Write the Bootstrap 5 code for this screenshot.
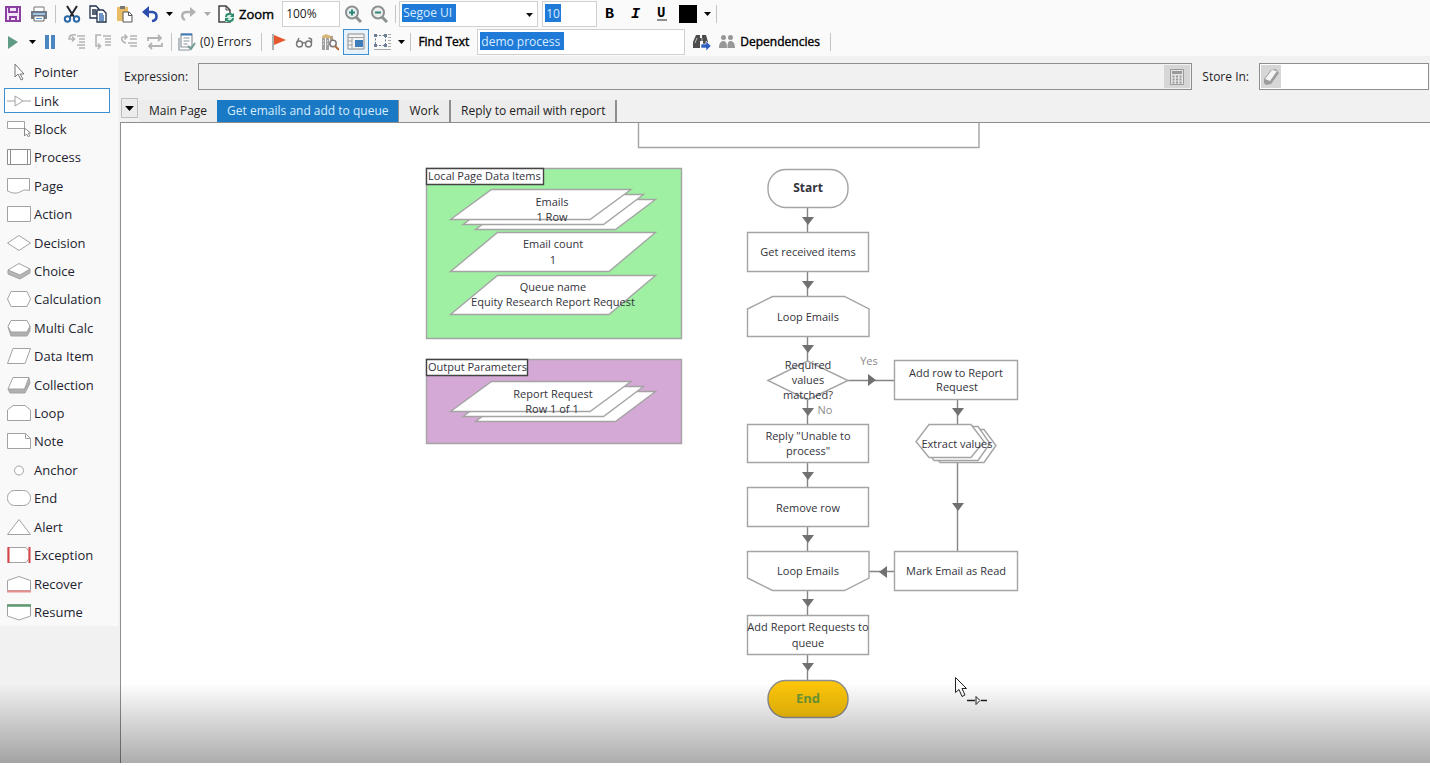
<!DOCTYPE html>
<html lang="en">
<head>
<meta charset="utf-8">
<meta name="viewport" content="width=device-width, initial-scale=1">
<title>Process Studio</title>
<link href="https://cdn.jsdelivr.net/npm/bootstrap@5.3.0/dist/css/bootstrap.min.css" rel="stylesheet">
<style>
  body { font-family: "Open Sans", "Noto Sans", sans-serif; font-size: 12px; line-height: 16px; color: #1e1e28; background: #fff; padding-bottom: 3px; }
  svg { display: block; flex: none; }
  .studio { background: #f1f1f1; }
  .toolbar { height: 28px; background: #fafafa; }
  .tool { width: 26px; height: 26px; padding: 0; border: 1px solid transparent; background: none; display: flex; align-items: center; justify-content: center; flex: none; color: #222; }
  .tool.wide { width: auto; gap: 4px; padding: 0 2px; }
  .tool.drop { width: 12px; }
  .tool.pressed { border: 1px solid #3c8fd0; background: #e6f1fa; }
  .tool svg { width: 18px; height: 18px; }
  .tool.drop svg { width: 7px; height: 4px; }
  .split { width: 7px; height: 18px; flex: none; background: linear-gradient(#c4c4c4, #c4c4c4) center / 1px 100% no-repeat; }
  .strong-label { font-size: 12px; color: #000; -webkit-text-stroke: 0.4px #000; }
  .strong-label.large { font-size: 13px; }
  .field { height: 26px; border: 1px solid #d0d0d0; background-color: #fff; border-radius: 0; padding: 0 0 2px 3px; font-size: 12px; color: #222; flex: none; appearance: none; outline: 0; }
  .w-zoom { width: 58px; } .w-font { width: 139px; } .w-size { width: 55px; } .w-find { width: 208px; }
  .picked { color: #d8ecff; background-image: linear-gradient(#1f7ad8, #1f7ad8); background-repeat: no-repeat; background-position: 2px 2px; }
  .picked.w-font { background-image: url("data:image/svg+xml,%3Csvg xmlns='http://www.w3.org/2000/svg' viewBox='0 0 7 4'%3E%3Cpath d='M0 0h7L3.500 4z' fill='%23111'/%3E%3C/svg%3E"), linear-gradient(#1f7ad8, #1f7ad8); background-size: 7px 4px, 54px 18px; background-position: 126px 11px, 2px 2px; }
  .picked.w-size { background-size: 16px 18px; }
  .picked.w-find { background-size: 84px 18px; }

  .palette-col { width: 120px; flex: none; }
  .palette { height: 570px; padding-top: 2px; width: 118px; background: #f9f9f9; }
  .stage { flex: 1 1 0; min-height: 0; margin: 2px 8px 2px 4px; padding: 0 0 0 2px; border: 1px solid transparent; background: none; display: flex; align-items: center; gap: 3px; font-size: 13px; color: #23232f; text-align: left; }
  .stage.chosen { border-color: #3c8fd0; background: #fff; }
  .stage svg { width: 24px; height: 18px; fill: #fff; stroke: #a2a2a2; stroke-width: 1; }

  .expr-row { height: 27px; margin: 7px 1px 7px 4px; }
  .box { border: 1px solid #8e8e8e; height: 27px; background: #f1f1f1; padding: 1px; }
  .box input { border: 0; background: transparent; min-width: 0; outline: 0; }
  .box button { border: 0; background: #d6d6d6; padding: 0; display: flex; align-items: center; justify-content: center; }
  .box .calc { width: 26px; }
  .box .rubber { width: 22px; }
  .expr-label { margin-right: 10px; }
  .store-label { margin: 0 10px; }
  .store-box { width: 170px; background: #fff; }
  .tabs { height: 26px; border-bottom: 1px solid #8e8e8e; padding-left: 1px; }
  .tabs button { border: 0; background: #ececec; color: #222; height: 22px; padding: 0 10px; white-space: nowrap; }
  .tabs .pages { width: 17px; height: 20px; padding: 0; border: 1px solid #bdbdbd; margin: 0 1px 4px 0; }
  .tabs .now { background: #1a79c4; color: #d4ecff; border-right: 1px solid #8e8e8e; }
  .tabs .ruled { border-right: 2px solid #8e8e8e; }
  .canvas { border-left: 1px solid #8e8e8e; background: #fff; overflow: hidden; min-height: 0; }
  .flow { width: 100%; height: 639px; font-size: 11px; fill: #fff; stroke: #a4a4a4; stroke-width: 1.400; }
  .flow text { fill: #33333b; stroke: none; text-anchor: middle; }
  .flow .lead-in { text-anchor: start; }
  .flow .faint { fill: #8c8c8c; }
  .flow .wire { fill: none; stroke: #858585; }
  .flow .tip { fill: #707070; stroke: none; }
  .shade { height: 80px; left: 0; right: 0; bottom: 0; background: linear-gradient(rgba(0,0,0,0), rgba(0,0,0,.15) 45%, rgba(0,0,0,.32)); pointer-events: none; }
</style>
</head>
<body class="d-flex flex-column min-vh-100">
<svg width="0" height="0" class="position-absolute" aria-hidden="true">
  <symbol id="caret" viewBox="0 0 7 4"><path d="M0 0h7L3.500 4z"/></symbol>
  <symbol id="down" viewBox="0 0 12 8"><path d="M0 0h12L6 8z"/></symbol>
</svg>
<div class="studio position-relative flex-fill d-flex flex-column">
  <header>
    <div class="toolbar d-flex align-items-center" role="toolbar" aria-label="Edit">
      <button class="tool" aria-label="Save"><svg viewBox="0 0 18 18" fill="none" stroke="#8b3fa0" stroke-width="2"><path d="M2 2h14v14H2z" fill="#f3e6f6"/><path d="M5 2v5h8V2M6 16v-4h6v4"/></svg></button>
      <button class="tool" aria-label="Print"><svg viewBox="0 0 18 18"><path d="M4 2h10v5H4z" fill="#fff" stroke="#777"/><path d="M1 6h16v8H1z" fill="#707a86"/><path d="M3 8h12v2H3z" fill="#9cc4e8"/><path d="M4 11h10v5H4z" fill="#fff" stroke="#666"/><path d="M6 13.500h6" stroke="#4a8fd0"/></svg></button>
      <span class="split"></span>
      <button class="tool" aria-label="Cut"><svg viewBox="0 0 18 18" fill="none"><path d="M4 1l7 11M14 1L7 12" stroke="#20242c" stroke-width="2"/><circle cx="4.500" cy="14" r="2.700" stroke="#2968a8" stroke-width="2"/><circle cx="13.500" cy="14" r="2.700" stroke="#2968a8" stroke-width="2"/></svg></button>
      <button class="tool" aria-label="Copy"><svg viewBox="0 0 18 18" fill="#fff" stroke="#20304a" stroke-width="1.300"><path d="M1 1h6l3 3v9H1z"/><path d="M3 5h4M3 7h5M3 9h5"/><path d="M8 5h6l3 3v9H8z"/><path d="M10 9h4M10 11h5M10 13h5M10 15h5" stroke="#3b6fb0"/></svg></button>
      <button class="tool" aria-label="Paste"><svg viewBox="0 0 18 18"><path d="M2 2h11v14H2z" fill="#e9bd66"/><path d="M5 1h5v3H5z" fill="#777"/><path d="M8 7h6l3 3v7H8z" fill="#fff" stroke="#555"/><path d="M13.500 7v3.500H17" fill="none" stroke="#555"/></svg></button>
      <button class="tool" aria-label="Undo"><svg viewBox="0 0 18 18"><path d="M4 7h7c6 0 6 8 0 9" fill="none" stroke="#2c4fae" stroke-width="2.600"/><path d="M1 7l7-6v12z" fill="#2c4fae"/></svg></button>
      <button class="tool drop" aria-label="Undo list"><svg><use href="#caret"/></svg></button>
      <button class="tool" aria-label="Redo"><svg viewBox="0 0 18 18"><path d="M13 7H8c-6 0-6 6-2 8" fill="none" stroke="#b2b2b2" stroke-width="2.500"/><path d="M17 7l-6-5v10z" fill="#b2b2b2"/></svg></button>
      <button class="tool drop" aria-label="Redo list"><svg fill="#aaa"><use href="#caret"/></svg></button>
      <button class="tool" aria-label="Refresh"><svg viewBox="0 0 18 18"><path d="M2 1h7l4 4v12H2z" fill="#fff" stroke="#444" stroke-width="1.500"/><path d="M9 1v4h4" fill="none" stroke="#444"/><path d="M8 8h9v9H8z" fill="#d7efe6"/><path d="M9 12c0-4 6-4 7-1M16 13c0 4-6 4-7 1" fill="none" stroke="#2b8a6a" stroke-width="1.800"/><path d="M17 8v4h-4zM8 17v-4h4z" fill="#2b8a6a"/></svg></button>
      <label class="strong-label large ps-0 pe-2" for="zoom">Zoom</label>
      <input class="field w-zoom" id="zoom" value="100%">
      <button class="tool" aria-label="Zoom in"><svg viewBox="0 0 18 18" fill="none"><circle cx="8" cy="7.500" r="6" stroke="#8a8f90" stroke-width="2" fill="#e8f2f0"/><path d="M12 12l5 5" stroke="#8a8f90" stroke-width="3"/><path d="M5 7.500h6M8 4.500v6" stroke="#2d8577" stroke-width="2"/></svg></button>
      <button class="tool" aria-label="Zoom out"><svg viewBox="0 0 18 18" fill="none"><circle cx="8" cy="7.500" r="6" stroke="#8a8f90" stroke-width="2" fill="#eee"/><path d="M12 12l5 5" stroke="#8a8f90" stroke-width="3"/><path d="M5 7.500h6" stroke="#2d8577" stroke-width="2"/></svg></button>
      <span class="split"></span>
      <select class="field picked w-font me-1" aria-label="Font"><option>Segoe UI</option></select>
      <input class="field picked w-size" aria-label="Font size" value="10">
      <button class="tool" aria-label="Bold"><svg viewBox="0 0 18 18"><text x="4" y="13" font-family="Liberation Mono" font-size="15" font-weight="bold">B</text></svg></button>
      <button class="tool" aria-label="Italic"><svg viewBox="0 0 18 18"><text x="4" y="13" font-family="Liberation Mono" font-size="15" font-weight="bold" font-style="italic">I</text></svg></button>
      <button class="tool" aria-label="Underline"><svg viewBox="0 0 18 18"><text x="4" y="12" font-family="Liberation Mono" font-size="14" font-weight="bold">U</text><path d="M4 15h10" stroke="#222"/></svg></button>
      <button class="tool" aria-label="Colour"><svg viewBox="0 0 18 18"><path d="M0 0h18v18H0z"/></svg></button>
      <button class="tool drop" aria-label="More colours"><svg><use href="#caret"/></svg></button>
      <span class="split"></span>
    </div>
    <div class="toolbar d-flex align-items-center" role="toolbar" aria-label="Run">
      <button class="tool" aria-label="Go"><svg viewBox="0 0 18 18"><path d="M4 3l10 6-10 7z" fill="#5f9c86"/></svg></button>
      <button class="tool drop" aria-label="Run speed"><svg><use href="#caret"/></svg></button>
      <button class="tool" aria-label="Pause"><svg viewBox="0 0 18 18" fill="#4a86c0"><path d="M3 2h4v14H3zM9 2h4v14H9z"/></svg></button>
      <button class="tool" aria-label="Step"><svg viewBox="0 0 18 18" fill="none" stroke="#b4b4b4" stroke-width="1.600"><path d="M8 2C3 1 1 3 1 6h5M4 3.500L6.500 6 4 8.500M9 3h8M11 6h6M11 9h6M9 12h8M11 15h6"/></svg></button>
      <button class="tool" aria-label="Step over"><svg viewBox="0 0 18 18" fill="none" stroke="#b4b4b4" stroke-width="1.600"><path d="M7 2H2v11h4M4 10.500L6.500 13 4 16M9 3h8M11 6h6M11 9h6M11 12h6"/></svg></button>
      <button class="tool" aria-label="Step out"><svg viewBox="0 0 18 18" fill="none" stroke="#b4b4b4" stroke-width="1.600"><path d="M6 10C1 9 1 4 3 4h4M4.500 1.500L7 4 4.500 6.500M10 3h7M10 6h7M8 10h9M10 13h7"/></svg></button>
      <button class="tool" aria-label="Reset"><svg viewBox="0 0 18 18" fill="none" stroke="#b4b4b4" stroke-width="1.800"><path d="M2 8V5h13M12 2l3 3-3 3M16 10v3H3M6 10l-3 3 3 3"/></svg></button>
      <span class="split"></span>
      <button class="tool wide"><svg viewBox="0 0 18 18" fill="#fff" stroke="#8a949c" stroke-width="1.200"><path d="M1 5v12h11"/><path d="M3 1h11v13H3z"/><path d="M3 1.500h11" stroke="#3f78b8" stroke-width="2"/><path d="M5.500 5h6M5.500 8h6M5.500 11h4"/><path d="M10 13l3 3 4-6" fill="none" stroke="#6f9c90" stroke-width="1.800"/></svg>(0) Errors</button>
      <span class="split ms-1"></span>
      <button class="tool" aria-label="Breakpoint"><svg viewBox="0 0 18 18"><path d="M4 1v16" stroke="#999" stroke-width="1.500"/><path d="M5 2l12 5-12 5z" fill="#e4582c"/></svg></button>
      <button class="tool" aria-label="Watch"><svg viewBox="0 0 18 18" fill="none" stroke="#777" stroke-width="1.400"><circle cx="4.500" cy="11" r="3"/><circle cx="13.500" cy="11" r="3"/><path d="M7 10.500c1-1 3-1 4 0M1.500 10L4 5M16.500 10V6l-3-1"/></svg></button>
      <button class="tool" aria-label="Process search"><svg viewBox="0 0 18 18"><path d="M1 5h3v12H1zM5 5h3v12H5z" fill="#a0a0a0"/><path d="M1 3l4-2 5 2v2H1z" fill="#d8b878"/><path d="M2 8h1M2 11h1M6 8h1M6 11h1" stroke="#fff"/><path d="M9 3h3v4H9z" fill="#b5a080"/><circle cx="12" cy="10.500" r="3.200" fill="#fff" stroke="#777" stroke-width="1.500"/><path d="M14 13l4 4" stroke="#b06a3a" stroke-width="2"/></svg></button>
      <button class="tool pressed" aria-label="Full screen"><svg viewBox="0 0 18 18"><path d="M1 1h16v15H1z" fill="#f4f4f4" stroke="#8c8c8c"/><path d="M1 4.500h16M5 4v12M1 8h4M1 12h4" stroke="#a0a0a0"/><path d="M8 7h8v7H8z" fill="#3f7cba"/></svg></button>
      <button class="tool" aria-label="Pan view"><svg viewBox="0 0 18 18" fill="none" stroke="#8a8a8a"><path d="M2.500 2.500h10v10h-10z" stroke="#6d7f95" stroke-dasharray="2 1.500"/><path d="M1 1h3v3H1zM11 1h3v3h-3zM1 11h3v3H1zM11 11h3v3h-3z" fill="#6d7f95" stroke="none"/><path d="M15 1.500h3M15 4.500h3M15 7.500h3M15 10.500h3M15 13.500h3M1 16.500h17" stroke="#aaa"/></svg></button>
      <button class="tool drop" aria-label="View options"><svg><use href="#caret"/></svg></button>
      <span class="split"></span>
      <label class="strong-label ps-1 pe-2" for="find">Find Text</label>
      <input class="field picked w-find" id="find" value="demo process">
      <button class="tool ms-1" aria-label="Find next"><svg viewBox="0 0 18 18"><path d="M3 2h4v3h2V2h4l2 7v6h-5V8H7v7H0V9z" fill="#4c4c4c"/><path d="M2 10l2-5M9 5v3" stroke="#bbb"/><path d="M8 11h5V8l5 5-5 5v-3H8z" fill="#2d5fc0" stroke="#fff" stroke-width=".6"/></svg></button>
      <button class="tool wide strong-label"><svg viewBox="0 0 18 18" fill="#989898"><circle cx="5.500" cy="4.500" r="2.500"/><circle cx="12.500" cy="4.500" r="2.500"/><path d="M1 15c0-5 2-7 4.500-7S9 10 9 15zM9.500 15c0-5 .5-7 3-7s4.500 2 4.500 7z"/></svg>Dependencies</button>
      <span class="split ms-1"></span>
    </div>
  </header>

  <div class="d-flex flex-fill">
    <aside class="palette-col">
      <div class="palette d-flex flex-column">
        <button class="stage"><svg viewBox="0 0 24 18"><path d="M8 1v13l3-3 3 6 2-1-3-5h4z" stroke="#777"/></svg>Pointer</button>
        <button class="stage chosen"><svg viewBox="0 0 24 18"><path d="M0 9h8M16 9h8M8 4v10l8-5z"/></svg>Link</button>
        <button class="stage"><svg viewBox="0 0 24 18"><path d="M.5 1.500h17v7H.5z"/><path d="M17.500 8v8l2-2 2 3 1-1-1-3h2z" stroke="#888"/></svg>Block</button>
        <button class="stage"><svg viewBox="0 0 24 18"><path d="M.5 1.500h23v15H.5zM3.500 1.500v15M20.500 1.500v15" stroke="#8c8c8c"/></svg>Process</button>
        <button class="stage"><svg viewBox="0 0 24 18"><path d="M.5 1.500h22v12c-7-2-8 2-13 2.500-4 .5-6-1-9-2z"/></svg>Page</button>
        <button class="stage"><svg viewBox="0 0 24 18"><path d="M.5 1.500h23v15H.5z"/></svg>Action</button>
        <button class="stage"><svg viewBox="0 0 24 18"><path d="M.5 9L12 1.500 23.500 9 12 16.500z"/></svg>Decision</button>
        <button class="stage"><svg viewBox="0 0 24 18"><path d="M1 8v4l12 5 10-6V7z" fill="#b5b5b5"/><path d="M1 8l11-6.500L23 7l-10 6z"/></svg>Choice</button>
        <button class="stage"><svg viewBox="0 0 24 18"><path d="M4 1.500h16l3.500 7.500-3.500 7.500H4L.5 9z"/></svg>Calculation</button>
        <button class="stage"><svg viewBox="0 0 24 18"><path d="M1 8l3 9h16l3-5V7z" fill="#b0b0b0"/><path d="M4 1.500h16L23 7l-3 6H4L1 7.500z"/></svg>Multi Calc</button>
        <button class="stage"><svg viewBox="0 0 24 18"><path d="M6 1.500h17.500L18 16.500H.5z"/></svg>Data Item</button>
        <button class="stage"><svg viewBox="0 0 24 18"><path d="M1 13l2 4h15l5-10-1-5z" fill="#b0b0b0"/><path d="M6 1.500h16L17.500 13H1z"/></svg>Collection</button>
        <button class="stage"><svg viewBox="0 0 24 18"><path d="M.5 16.500V6L6 1.500h12L23.500 6v10.500z"/></svg>Loop</button>
        <button class="stage"><svg viewBox="0 0 24 18"><path d="M.5 1.500h18l5 5v10H.5zM18.500 1.500v5h5"/></svg>Note</button>
        <button class="stage"><svg viewBox="0 0 24 18"><circle cx="12" cy="9.500" r="4.500"/></svg>Anchor</button>
        <button class="stage"><svg viewBox="0 0 24 18"><rect x=".5" y="1.500" width="23" height="15" rx="7"/></svg>End</button>
        <button class="stage"><svg viewBox="0 0 24 18"><path d="M12 1.500l11.500 15H.5z"/></svg>Alert</button>
        <button class="stage"><svg viewBox="0 0 24 18"><path d="M1 1.500h18l3 4v7l-3 4H1z"/><path d="M1.500 1v16M22.500 1v16" stroke="#d9444a" stroke-width="2"/></svg>Exception</button>
        <button class="stage"><svg viewBox="0 0 24 18"><path d="M.5 15.500V5.500l11.500-4 11.500 4v10z"/><path d="M0 16.500h24" stroke="#ee8d8d" stroke-width="2"/></svg>Recover</button>
        <button class="stage"><svg viewBox="0 0 24 18"><path d="M.5 2v11L12 17l11.500-4V2z"/><path d="M0 2.500h24" stroke="#5d9a70" stroke-width="2.500"/></svg>Resume</button>
      </div>
    </aside>

    <main class="flex-fill d-flex flex-column">
      <div class="expr-row d-flex align-items-center">
        <label for="expr" class="expr-label">Expression:</label>
        <div class="box d-flex flex-fill">
          <input id="expr" class="flex-fill">
          <button class="calc" aria-label="Expression builder"><svg width="14" height="16" viewBox="0 0 14 16" fill="none" stroke="#9a9a9a"><path d="M.5.500h13v15H.5z" fill="#e4e4e4"/><path d="M2 3.500h10" stroke-width="3"/><path d="M2.500 7.500h9M2.500 10.500h9M2.500 13.500h9" stroke-width="2" stroke-dasharray="2 1.500"/></svg></button>
        </div>
        <label for="store" class="store-label">Store In:</label>
        <div class="box store-box d-flex">
          <button class="rubber" aria-label="Clear"><svg width="16" height="16" viewBox="0 0 16 16"><path d="M1 10l7-9 5-1 3 4-8 11-5 1-2-2z" fill="#9c9c9c"/><path d="M2 10l7-9 5 1-7 10z" fill="#f4f4f4"/></svg></button>
          <input id="store" class="flex-fill">
        </div>
      </div>
      <div class="tabs d-flex align-items-end" role="tablist">
        <button class="pages" aria-label="Page list"><svg class="m-auto" width="9" height="5"><use href="#caret"/></svg></button>
        <button role="tab">Main Page</button>
        <button role="tab" class="now">Get emails and add to queue</button>
        <button role="tab" class="ruled">Work</button>
        <button role="tab" class="ruled">Reply to email with report</button>
      </div>
      <div class="canvas flex-fill">
        <svg class="flow" role="img" aria-label="Process flow">
          <g transform="translate(-121 -123)">
            <path d="M638.500 110v37.500h340.500V110"/>
            <path d="M426.500 168.500h255v170h-255z" fill="#9ff0a3"/>
            <path d="M426.500 359.500h255v84h-255z" fill="#d5a9d5"/>
            <path d="M426.500 168.500h117v16h-117zM426.500 359.500h101v16h-101z" stroke="#444"/>
            <text x="428" y="180" class="lead-in">Local Page Data Items</text>
            <text x="428" y="371" class="lead-in">Output Parameters</text>
            <g id="stack">
              <path d="M516 199.500h139.500l-40 30H475.500z"/><path d="M504 194.500h139.500l-40 30H463z"/><path d="M491.500 189.500H631l-41 30H450.500z"/>
            </g>
            <use href="#stack" y="192"/>
            <text x="552" y="206">Emails</text><text x="552" y="221">1 Row</text>
            <path d="M497.500 232.500H655.500l-46.500 39H450.500zM497.500 275.500H655.500l-46.500 39H450.500z"/>
            <text x="553" y="248">Email count</text><text x="553" y="264">1</text>
            <text x="553" y="291">Queue name</text><text x="553" y="306">Equity Research Report Request</text>
            <text x="553" y="398">Report Request</text><text x="552" y="413">Row 1 of 1</text>

            <path class="wire" d="M807.500 207v480M957.500 399v160M848 380.500h46M869 571.500h25"/>
            <rect x="768" y="169.500" width="80" height="38" rx="18"/>
            <path d="M747.500 232.500h121v39h-121zM747.500 424.500h121v38h-121zM747.500 487.500h121v39h-121zM747.500 615.500h121v39h-121zM894.500 360.500h123v39h-123zM894.500 551.500h123v39h-123z"/>
            <path d="M747.500 336.500V309l25-12.500h72l24.500 12.500v27.500zM747.500 551.500H869V578l-24.500 12.500h-72l-25-12.500zM768 380.500l39.500-19.500 40.500 19.500-40.500 19.500z"/>
            <path d="M940 429.500h44l12 16-12 17h-44l-12-17z"/><path d="M934 426.500h44l12 17-12 17h-44l-12-17z"/><path d="M929 424.500h42l13 17-13 16h-42l-13-16z"/>
            <rect x="768" y="680.500" width="80" height="37" rx="18" fill="#fcc50a" stroke="#8e8e8e"/>
            <g class="tip">
              <use href="#down" x="802" y="217" width="12" height="8"/><use href="#down" x="802" y="281" width="12" height="8"/>
              <use href="#down" x="802" y="345" width="12" height="8"/><use href="#down" x="802" y="408" width="12" height="8"/>
              <use href="#down" x="802" y="472" width="12" height="8"/><use href="#down" x="802" y="535" width="12" height="8"/>
              <use href="#down" x="802" y="599" width="12" height="8"/><use href="#down" x="802" y="663" width="12" height="8"/>
              <use href="#down" x="952" y="408" width="12" height="8"/><use href="#down" x="952" y="503" width="12" height="8"/>
              <path d="M868 374v12l8-6zM887 566v12l-8-6z"/>
            </g>
            <text x="808" y="192" class="fw-bold" font-size="12">Start</text>
            <text x="808" y="256">Get received items</text>
            <text x="808" y="321">Loop Emails</text>
            <text x="808" y="369">Required</text><text x="808" y="384">values</text><text x="808" y="399">matched?</text>
            <text x="869" y="365" class="faint">Yes</text><text x="825" y="414" class="faint">No</text>
            <text x="956" y="377">Add row to Report</text><text x="957" y="391">Request</text>
            <text x="808" y="440">Reply "Unable to</text><text x="808" y="455">process"</text>
            <text x="957" y="448">Extract values</text>
            <text x="808" y="512">Remove row</text>
            <text x="808" y="575">Loop Emails</text>
            <text x="956" y="575">Mark Email as Read</text>
            <text x="808" y="631">Add Report Requests to</text><text x="808" y="647">queue</text>
            <g stroke="#222" stroke-width="1"><path d="M955.500 677.500v15l3.500-3 3 7 3-1.500-3-6.500h4.500z"/><path d="M967 700.500h8M981 700.500h6" stroke-width="1.500"/><path d="M976 696.500v8l4-4z"/></g>
            <text x="808" y="703" class="fw-bold" font-size="13" style="fill:#6f9a35">End</text>
          </g>
        </svg>
      </div>
    </main>
  </div>
  <div class="shade position-absolute"></div>
</div>
<script src="https://cdn.jsdelivr.net/npm/bootstrap@5.3.0/dist/js/bootstrap.bundle.min.js"></script>
</body>
</html>
